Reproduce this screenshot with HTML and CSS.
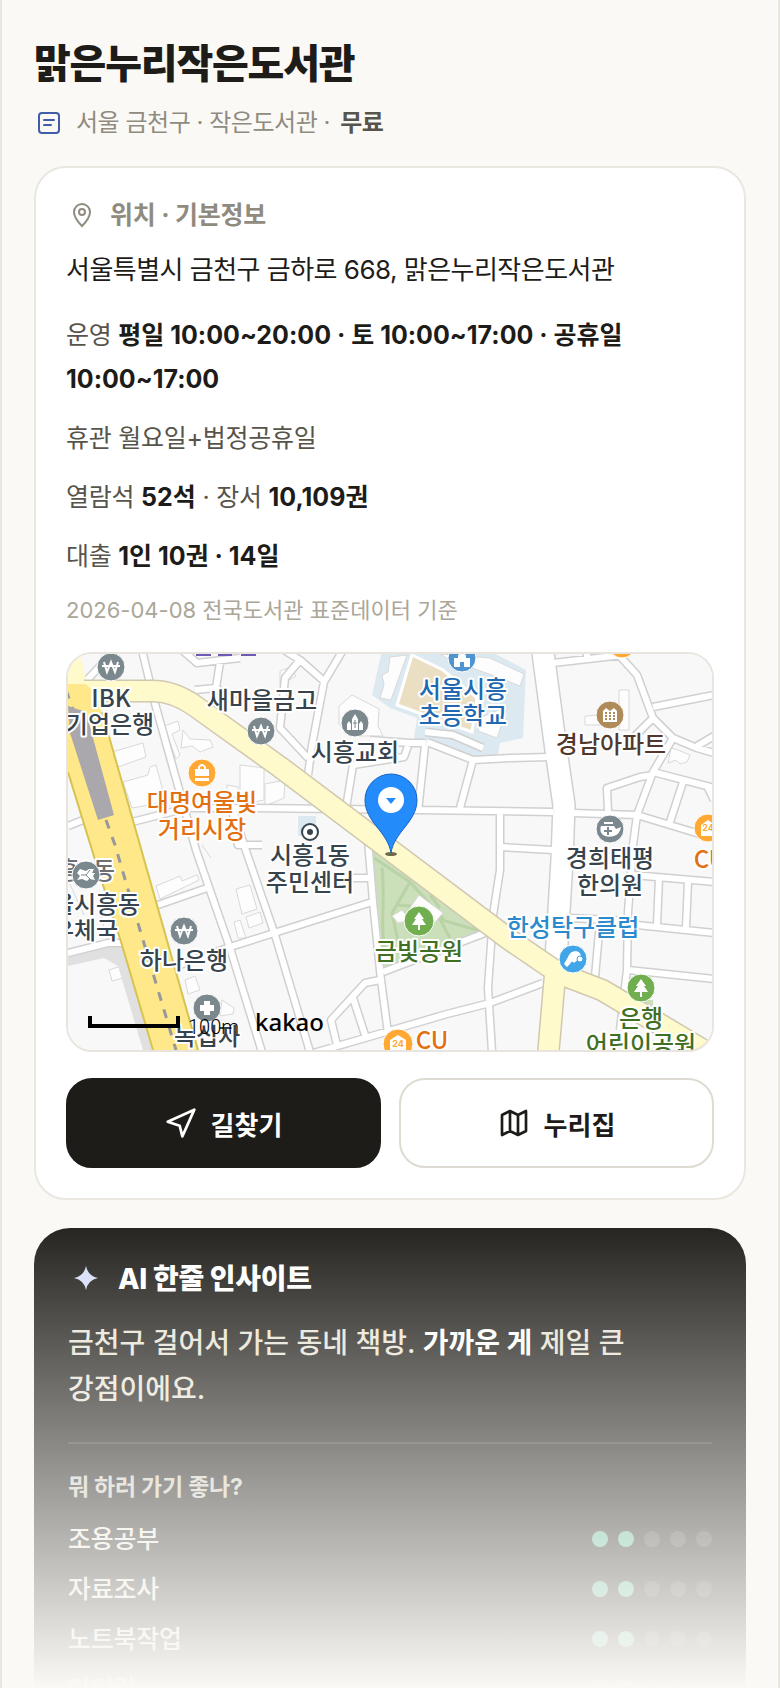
FILE: index.html
```
<!DOCTYPE html>
<html lang="ko">
<head>
    <meta charset="UTF-8">
    <meta name="viewport" content="width=device-width, initial-scale=1">
    <title>맑은누리작은도서관</title>
    <link rel="stylesheet" href="styles.css">
</head>
<body>
<main class="page">
    <h1 class="title">맑은누리작은도서관</h1>
    <p class="subtitle">
        <svg class="subtitle-icon" viewBox="0 0 30 30" aria-hidden="true">
            <rect x="5" y="5" width="20" height="20" rx="3"/>
            <path d="M10 12h10M10 17h7"/>
        </svg>
        <span>서울 금천구 · 작은도서관 · <b>무료</b></span>
    </p>

    <section class="card">
        <h2 class="card-title">
            <svg viewBox="0 0 32 32" aria-hidden="true">
                <path d="M16 27C13 24 8 18 8 13a8 8 0 0 1 16 0c0 5-5 11-8 14z"/>
                <circle cx="16" cy="13" r="3"/>
            </svg>
            위치 · 기본정보
        </h2>
        <p class="address">서울특별시 금천구 금하로 668, 맑은누리작은도서관</p>
        <div class="facts">
            <p>운영 <b>평일 10:00~20:00 · 토 10:00~17:00 · 공휴일 10:00~17:00</b></p>
            <p>휴관 월요일+법정공휴일</p>
            <p>열람석 <b>52석</b> · 장서 <b>10,109권</b></p>
            <p>대출 <b>1인 10권 · 14일</b></p>
        </div>
        <p class="source">2026-04-08 전국도서관 표준데이터 기준</p>

        <div class="map">
            <svg viewBox="68 654 644 396" preserveAspectRatio="xMidYMid slice" role="img" aria-label="지도">
                <defs>
                    <path id="minor" d="M142 650L154 700L196 850L230 948L262 1052
                        M228 795L244 845L275 935L310 1052
                        M155 906L207 888 M180 965L230 947L290 928L372 902
                        M368 840L373 902L381 980L388 1033
                        M310 1054L365 1038L447 1014L490 1003L543 983
                        M380 980L365 983L331 1020L337 1045 M353 998L366 1038
                        M340 878L370 878 M383 972L485 933
                        M500 812L500 870L493 915L488 988L492 1052
                        M132 822L187 808L252 808L417 810L553 812 M573 813L637 815L693 832L714 837
                        M553 663L623 655 M587 650L587 658
                        M618 654L637 675L653 718L673 738L697 748L714 753 M653 707L714 695 M697 746L714 736
                        M673 738L653 772L637 815L633 845L628 912L627 970L620 1030 M653 718L635 736
                        M653 772L714 788 M608 812L607 788L640 777L653 775 M683 782L670 822 M708 788L714 800
                        M427 742L473 760L510 758L550 757 M473 760L460 808 M425 745L418 812
                        M425 743L410 743L370 740 M408 746L404 757L353 765L346 808 M425 732L453 735L483 748
                        M343 650L324 682L312 745L308 775 M284 650L300 660L325 682 M300 660L285 678L280 728L308 758
                        M182 650L197 663L240 658 M220 662L216 688L195 690 M216 688L240 705
                        M87 680L102 664L114 650 M500 847L553 850 M68 826L88 818
                        M633 875L714 882 M659 878L657 925 M688 882L686 927 M637 925L714 933
                        M628 970L714 979 M570 918L632 921 M600 921L594 988
                        M232 808L238 845L262 845 M68 953L108 943L122 943"/>
                    <path id="avenue" d="M542 645L556 750L564 805L562 860L556 960"/>
                    <path id="yellow" d="M84 691L152 691Q174 691 195 706L280 767L385 846L510 940L560 974L602 990L720 1060 M555 975L548 1056"/>
                    <g id="tree"><path fill="#fff" d="M0-9L5-2H3L7 4H1V9H-1V4H-7L-3-2H-5z"/></g>
                    <path id="won" class="line" d="M-7-5L-4 5L0-5L4 5L7-5M-9-1H9"/>
                </defs>
                <rect class="land" x="68" y="654" width="644" height="396"/>

                <polygon class="school" points="382,650 372,695 390,708 417,718 414,738 440,744 475,756 498,755 500,743 523,738 526,670 488,650"/>
                <polygon class="field" points="412,655 443,670 477,698 472,732 397,705"/>
                <g class="building">
                    <path d="M390 657L407 655L391 700L380 698L384 685L382 675L388 672z"/>
                    <path d="M440 654L490 658L524 674L520 686L500 678L450 660z"/>
                    <path d="M482 717L508 706L497 738L478 731z"/>
                    <path d="M339 706L352 695L379 709L378 726L383 736L360 736L339 724z"/>
                    <path d="M112 752L143 743L146 757L118 767z M123 782L148 775L150 767L156 765L166 802L132 808z"/>
                    <path d="M164 726L178 721L180 730L172 734L180 755L176 759z M183 730L190 739L210 740L213 747L200 752L192 746L181 748z"/>
                    <path d="M240 765L264 768L264 800L240 805z M227 785L238 787L238 797L227 797z M265 784L285 780L284 798L265 806z"/>
                    <path d="M619 690H629V730H619z M585 716L600 715V725H585z M671 748L678 750L690 755L687 762L680 764L676 760L668 763z"/>
                    <path d="M156 886L180 876L182 881L197 875L199 880L160 899z M236 889L250 885L257 909L242 914z M246 917L260 912L263 923L249 928z M234 922L240 920L246 938L238 938z"/>
                    <path d="M280 671L290 667L296 676L280 685z M109 970L121 966L123 978L112 981z M185 980L195 976L200 990L188 994z M222 1000L234 1008L233 1014L220 1016z"/>
                    <path d="M202 845L211 858 M78 780L92 818 M68 880L84 915 M98 905L108 942"/>
                </g>
                <rect class="school" x="298" y="816" width="18" height="20"/>

                <polygon class="park" points="372,850 390,856 483,932 433,949 384,968"/>
                <path class="park-path" d="M374 858L410 882L445 921L484 932M382 868C386 900 379 925 386 960M410 882L392 913L400 950M398 905L434 908L450 938M430 895L440 908"/>
                <path class="building" d="M419 895L443 913L430 928L407 912z M392 916L402 910L410 920L398 923z"/>
                <rect class="park" x="627" y="1000" width="26" height="10"/>

                <polygon class="shadow" points="68,956 122,944 152,1050 143,1050 118,966 104,958 68,966"/>
                <use class="case" href="#minor"/>
                <use class="case case-wide" href="#avenue"/>
                <use class="road" href="#minor"/>
                <use class="road road-wide" href="#avenue"/>

                <polygon class="pale" points="68,654 80,654 88,688 68,688"/>
                <use class="yellow-case" href="#yellow"/>
                <use class="yellow" href="#yellow"/>
                <polygon class="rail" points="68,684 86,684 92,690 102,712 138,838 198,1050 153,1050 122,945 92,850 68,772"/>
                <path class="rail-edge" d="M102 712L138 838L198 1050 M68 772L92 850L122 945L153 1050"/>
                <path class="rail-line" d="M66 690L76 718 M106 820L115 845L137 920L176 1050"/>
                <polygon class="platform" points="68,706 86,712 114,815 98,820 70,733"/>

                <g fill="#6c5bb5">
                    <rect x="196" y="653" width="15" height="3"/>
                    <rect x="218" y="653" width="14" height="3"/>
                    <rect x="241" y="653" width="15" height="3"/>
                </g>

                <g class="labels">
                    <text class="area" x="115" y="879">시흥1동</text>
                </g>

                <!-- 장소 아이콘 -->
                <g class="pin gray" transform="translate(111 667)"><circle r="14"/><use href="#won"/></g>
                <g class="pin gray" transform="translate(261 731)"><circle r="14"/><use href="#won"/></g>
                <g class="pin gray" transform="translate(184 931)"><circle r="14"/><use href="#won"/></g>
                <g class="pin orange" transform="translate(202 773)"><circle r="14"/><path d="M-7-4H7V3H-7z M-7 5H7V8H-7z"/><path class="line" d="M-3-4V-6Q0-10 3-6V-4"/></g>
                <g class="pin gray" transform="translate(355 723)"><circle r="14"/><path d="M-8 7V1L-6-2L-4 1V7z M4 7V1L6-2L8 1V7z M-3 7V-4L0-9L3-4V7z"/><path stroke="#7b888e" stroke-width="1" d="M0-3V5M-2 0H2"/></g>
                <g class="pin blue" transform="translate(462 658)"><circle r="14"/><path d="M-8 9V0H-4V-3L0-6L4-3V0H8V9H2V4H-2V9z"/></g>
                <g class="pin brown" transform="translate(610 715)"><circle r="14"/><path d="M-7 7V-4L-4-7L0-4L4-7L7-4V7z"/><path stroke="#ae8b59" stroke-width="2" stroke-dasharray="2 2" d="M-5-2H6M-5 1H6M-5 4H6"/></g>
                <g class="pin orange" transform="translate(622 644)"><circle r="14"/></g>
                <g class="pin gray" transform="translate(610 829)"><circle r="14"/><path d="M-6-7H3V-5H-6z M-9-3H4L6 0L11-2Q10 5 4 7Q-2 9-7 6Q-11 2-9-3z"/><path stroke="#7b888e" stroke-width="2" d="M-2-2V6M-6 2H2"/></g>
                <g class="pin gray" transform="translate(86 875)"><circle r="14"/><path d="M-9-2L-6-6L0-4L3-6H8L6-2H9L7 1L9 5L3 4L1 6L-4 4L-9 5L-6 1z"/><path class="cut" d="M-5 0H0M4-5L0 0L5 5"/></g>
                <g class="pin gray" transform="translate(207 1008)"><circle r="14"/><path d="M-3-7H3V-3H7V3H3V7H-3V3H-7V-3H-3z"/></g>
                <g class="pin green" transform="translate(419 921)"><circle r="15"/><use href="#tree"/></g>
                <g class="pin green" transform="translate(641 988)"><circle r="14"/><use href="#tree"/></g>
                <g class="pin sky" transform="translate(573 959)"><circle r="14"/><path d="M-5-2Q-3-8 3-8Q8-7 8-2L1 4Q-1 1-3 5L-6 8L-9 5z"/><circle class="dot" cx="7" cy="0" r="3"/></g>
                <g class="pin orange" transform="translate(708 828)"><circle r="14"/><path d="M-7 8V-3L0-8L7-3V8z"/><text class="store" y="3">24</text></g>
                <g class="pin orange" transform="translate(398 1044)"><circle r="15"/><path d="M-8 6V-4L0-9L8-4V6z"/><text class="store" y="3">24</text></g>
                <g transform="translate(310 832)"><circle r="8" fill="#fff" stroke="#37444d" stroke-width="2"/><circle r="3" fill="#37444d"/></g>

                <g class="labels">
                    <text x="111" y="707">IBK</text>
                    <text x="110" y="733">기업은행</text>
                    <text x="262" y="709">새마을금고</text>
                    <text class="t-orange" x="202" y="811">대명여울빛</text>
                    <text class="t-orange" x="202" y="838">거리시장</text>
                    <text x="355" y="761">시흥교회</text>
                    <text class="t-blue" x="463" y="698">서울시흥</text>
                    <text class="t-blue" x="463" y="724">초등학교</text>
                    <text class="t-brown" x="611" y="753">경남아파트</text>
                    <text x="610" y="867">경희태평</text>
                    <text x="610" y="894">한의원</text>
                    <text x="310" y="864">시흥1동</text>
                    <text x="310" y="891">주민센터</text>
                    <text x="85" y="913">서울시흥동</text>
                    <text x="85" y="939">우체국</text>
                    <text x="184" y="969">하나은행</text>
                    <text x="207" y="1045">녹십자</text>
                    <text class="t-green" x="419" y="960">금빛공원</text>
                    <text class="t-green" x="641" y="1027">은행</text>
                    <text class="t-green" x="641" y="1053">어린이공원</text>
                    <text class="t-sky" x="573" y="936">한성탁구클럽</text>
                    <text class="t-orange" x="710" y="868">CU</text>
                    <text class="t-orange" x="432" y="1049">CU</text>
                </g>

                <ellipse cx="391" cy="854" rx="6" ry="2" fill="#6d6a4c"/>
                <path class="marker" d="M391 853C388 832 365 822 365 800a26 26 0 0 1 52 0C417 822 394 832 391 853z"/>
                <circle cx="391" cy="800" r="13" fill="#fff"/>
                <path d="M386 798H396L391 804z" fill="#238cfa"/>

                <path class="scale" d="M90 1016V1026H178V1016"/>
                <text class="scale-text" x="188" y="1034">100m</text>
                <text class="map-logo" x="255" y="1031">kakao</text>
            </svg>
        </div>

        <div class="actions">
            <a class="btn btn-dark" href="#directions">
                <svg viewBox="0 0 24 24" aria-hidden="true"><path d="M2 11L22 2L13 22L11 14z"/></svg>
                길찾기
            </a>
            <a class="btn" href="#home">
                <svg viewBox="0 0 24 24" aria-hidden="true"><path d="M3 6L9 3L15 6L21 3V18L15 21L9 18L3 21zM9 3V18M15 6V21"/></svg>
                누리집
            </a>
        </div>
    </section>

    <section class="insight">
        <h2 class="insight-title">
            <svg viewBox="0 0 36 36" aria-hidden="true"><path d="M18 5Q20 15 30 17Q20 19 18 29Q16 19 6 17Q16 15 18 5z"/></svg>
            AI 한줄 인사이트
        </h2>
        <p class="insight-text">금천구 걸어서 가는 동네 책방. <b>가까운 게</b> 제일 큰 강점이에요.</p>
        <h3 class="uses-title">뭐 하러 가기 좋나?</h3>
        <ul class="uses">
            <li>조용공부 <span class="dots"><i class="on"></i><i class="on"></i><i></i><i></i><i></i></span></li>
            <li>자료조사 <span class="dots"><i class="on"></i><i class="on"></i><i></i><i></i><i></i></span></li>
            <li>노트북작업 <span class="dots"><i class="on"></i><i class="on"></i><i></i><i></i><i></i></span></li>
            <li>아이랑 <span class="dots"><i class="on"></i><i class="on"></i><i></i><i></i><i></i></span></li>
        </ul>
    </section>
    <div class="fade"></div>
</main>
</body>
</html>
```
FILE: styles.css
```
* {
    box-sizing: border-box;
}

body {
    margin: 0;
    background: #faf9f6;
    color: #1d1c18;
    font-family: Inter, "Noto Sans CJK KR", sans-serif;
    font-size: 25px;
    letter-spacing: -0.01em;
    word-break: keep-all;
}

h1, h2, h3, p, ul {
    margin: 0;
    padding: 0;
}

.page {
    position: relative;
    height: 100vh;
    overflow: hidden;
    padding: 38px 32px 0;
    border: solid #e9e7e0;
    border-width: 0 2px;
}

.title {
    font-size: 40px;
    line-height: 52px;
    font-weight: 800;
    letter-spacing: -0.03em;
}

.subtitle {
    display: flex;
    align-items: center;
    gap: 12px;
    margin: 16px 0 26px;
    font-size: 24px;
    line-height: 34px;
    letter-spacing: -0.02em;
    color: #8f8b7f;
}

.subtitle b {
    margin-left: 4px;
    font-weight: 600;
    color: #57544b;
}

.subtitle-icon {
    width: 30px;
    height: 30px;
    fill: none;
    stroke: #405cab;
    stroke-width: 2;
    stroke-linecap: round;
}

.card {
    padding: 30px;
    background: #fff;
    border: 2px solid #e9e7e0;
    border-radius: 32px;
}

.card-title {
    display: flex;
    align-items: center;
    gap: 12px;
    font-size: 25px;
    line-height: 34px;
    font-weight: 700;
    color: #8f8b7f;
}

.card-title svg {
    width: 32px;
    height: 32px;
    fill: none;
    stroke: #8f8b7f;
    stroke-width: 2;
}

.address {
    margin: 16px 0 21px;
    font-size: 26px;
    line-height: 44px;
    letter-spacing: -0.02em;
}

.facts {
    display: grid;
    gap: 15px;
    line-height: 44px;
    color: #57544b;
}

.facts b {
    color: #1d1c18;
    font-weight: 700;
    letter-spacing: 0;
}

.source {
    margin: 14px 0 24px;
    font-size: 22px;
    line-height: 36px;
    letter-spacing: 0;
    color: #aba698;
}

.map {
    overflow: hidden;
    border: 2px solid #e9e5de;
    border-radius: 26px;
    letter-spacing: 0;
}

.map svg {
    display: block;
    width: 100%;
    height: 396px;
}

.land { fill: #f8f8f8; }
.school { fill: #dce9f1; }
.field { fill: #eadfc2; stroke: #fff; stroke-width: 3; }
.building { fill: #fdfdfd; stroke: #d9d9d9; stroke-width: 1; }
.park { fill: #cadfba; }
.park-path { fill: none; stroke: #b9d3a6; stroke-width: 3; }
.shadow { fill: #e0e0e0; }
.case, .road, .yellow-case, .yellow { fill: none; stroke-linejoin: round; }
.case { stroke: #d0d0d0; stroke-width: 9; }
.road { stroke: #fff; stroke-width: 6; }
.case-wide { stroke-width: 24; }
.road-wide { stroke-width: 21; }
.pale { fill: #fefacb; }
.yellow-case { stroke: #d1c8b0; stroke-width: 23; }
.yellow { stroke: #fefacb; stroke-width: 20; }
.rail { fill: #fee88a; }
.rail-edge { fill: none; stroke: #d6c350; stroke-width: 2; }
.rail-line { fill: none; stroke: #98979b; stroke-width: 3; stroke-dasharray: 9 9; }
.platform { fill: #aaa8ac; }

.pin circle { stroke: #fff; stroke-width: 1; }
.pin path { fill: #fff; }
.pin .line, #won { fill: none; stroke: #fff; stroke-width: 2; }
.pin .cut { fill: none; stroke: #7b888e; stroke-width: 1; }
.pin .dot { fill: #fff; stroke: #41a5e8; }
.gray { fill: #7b888e; }
.orange { fill: #ffa834; }
.blue { fill: #4f93d1; }
.brown { fill: #ae8b59; }
.green { fill: #70ae50; }
.sky { fill: #41a5e8; }

.store {
    font: 700 9px Inter, sans-serif;
    text-anchor: middle;
}

.labels text {
    font-family: "Noto Sans CJK KR", sans-serif;
    font-size: 24px;
    font-weight: 500;
    text-anchor: middle;
    fill: #37444d;
    stroke: #fff;
    stroke-width: 4;
    stroke-linejoin: round;
    paint-order: stroke;
}

.labels .area { text-anchor: end; fill: #6d7073; }
.labels .t-orange { fill: #e27012; }
.labels .t-blue { fill: #2069b2; }
.labels .t-brown { fill: #51382b; }
.labels .t-green { fill: #3f7024; }
.labels .t-sky { fill: #2b8acb; }

.marker { fill: #238cfa; stroke: #1663c9; stroke-width: 1; }
.scale { fill: none; stroke: #000; stroke-width: 4; }
.scale-text { font: 300 20px Roboto, sans-serif; }
.map-logo { font: 500 24px "Noto Sans", sans-serif; }

.actions {
    display: grid;
    grid-template-columns: 1fr 1fr;
    gap: 18px;
    margin-top: 26px;
}

.btn {
    display: flex;
    align-items: center;
    justify-content: center;
    gap: 14px;
    height: 90px;
    border: 2px solid #dedbd2;
    border-radius: 26px;
    background: #fff;
    color: #1d1c18;
    font-size: 26px;
    font-weight: 700;
    letter-spacing: 0;
    text-decoration: none;
}

.btn svg {
    width: 32px;
    height: 32px;
    fill: none;
    stroke: currentColor;
    stroke-width: 2;
    stroke-linejoin: round;
}

.btn-dark {
    background: #1d1c18;
    border-color: #1d1c18;
    color: #fff;
}

.insight {
    margin-top: 28px;
    padding: 30px 34px;
    border-radius: 36px;
    background: #1d1c18;
    color: #f1ede3;
}

.insight-title {
    display: flex;
    align-items: center;
    gap: 14px;
    font-size: 28px;
    line-height: 42px;
    font-weight: 800;
    color: #fff;
}

.insight-title svg {
    width: 36px;
    height: 36px;
    fill: #d5defa;
}

.insight-text {
    margin-top: 20px;
    padding-bottom: 30px;
    border-bottom: 2px solid rgba(255, 255, 255, 0.12);
    font-size: 28px;
    line-height: 46px;
    font-weight: 500;
    letter-spacing: 0;
    color: #e8e4d8;
}

.insight-text b {
    color: #fff;
    font-weight: 700;
}

.uses-title {
    margin: 27px 0 11px;
    font-size: 23px;
    line-height: 32px;
    font-weight: 700;
    color: #d2cec3;
}

.uses {
    list-style: none;
    line-height: 50px;
    font-weight: 500;
}

.uses li {
    display: flex;
    align-items: center;
    justify-content: space-between;
}

.dots {
    display: flex;
    gap: 10px;
}

.dots i {
    width: 16px;
    height: 16px;
    border-radius: 50%;
    background: rgba(255, 255, 255, 0.15);
}

.dots .on {
    background: #5cb896;
}

.fade {
    position: absolute;
    left: -2px;
    right: -2px;
    bottom: 0;
    height: 480px;
    background: linear-gradient(rgba(250, 249, 246, 0), #faf9f6);
}
```
